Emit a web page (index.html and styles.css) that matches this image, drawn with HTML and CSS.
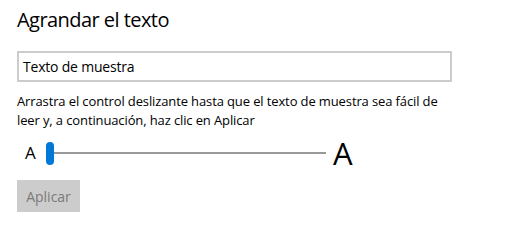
FILE: index.html
```html
<!DOCTYPE html>
<html lang="es">
<head>
<meta charset="utf-8">
<link rel="stylesheet" href="styles.css">
</head>
<body>
<main class="page">
  <h1 class="title">Agrandar el texto</h1>
  <div class="sample">Texto de muestra</div>
  <p class="help">Arrastra el control deslizante hasta que el texto de muestra sea fácil de leer y, a continuación, haz clic en Aplicar</p>
  <div class="slider-row">
    <span class="a-small">A</span>
    <div class="slider">
      <span class="thumb"></span>
      <span class="track"></span>
    </div>
    <span class="a-large">A</span>
  </div>
  <button class="apply" disabled>Aplicar</button>
</main>
</body>
</html>
```
FILE: styles.css
```css
html, body {
  margin: 0;
  background: #ffffff;
}
body {
  font-family: "Open Sans", "Noto Sans", "Liberation Sans", sans-serif;
  color: #000;
}
.page {
  padding: 0 0 0 17px;
  display: flex;
  flex-direction: column;
  align-items: flex-start;
}
.title {
  margin: 6px 0 0 0;
  font-size: 20px;
  font-weight: 400;
  line-height: 28px;
  letter-spacing: -0.55px;
}
.sample {
  margin-top: 17px;
  box-sizing: border-box;
  width: 435px;
  height: 31px;
  border: 2px solid #cccccc;
  padding: 0 0 0 4px;
  font-size: 14px;
  line-height: 27px;
  letter-spacing: -0.2px;
}
.help {
  margin: 10px 0 0 0;
  width: 440px;
  font-size: 13px;
  line-height: 19px;
  letter-spacing: -0.12px;
}
.slider-row {
  display: flex;
  align-items: center;
  height: 24px;
  margin-top: 11px;
}
.a-small {
  font-size: 17px;
  margin-left: 8px;
  width: 21px;
  line-height: 24px;
}
.slider {
  display: flex;
  align-items: center;
  width: 280px;
}
.thumb {
  width: 8px;
  height: 23px;
  border-radius: 4px;
  background: #0078d7;
}
.track {
  flex: 1;
  height: 2px;
  background: #999999;
}
.a-large {
  font-size: 31px;
  margin-left: 7px;
  line-height: 24px;
}
.apply {
  margin-top: 15px;
  width: 63px;
  height: 32px;
  border: none;
  background: #cccccc;
  color: #7a7a7a;
  font-family: inherit;
  font-size: 14px;
  padding: 0;
}
```
